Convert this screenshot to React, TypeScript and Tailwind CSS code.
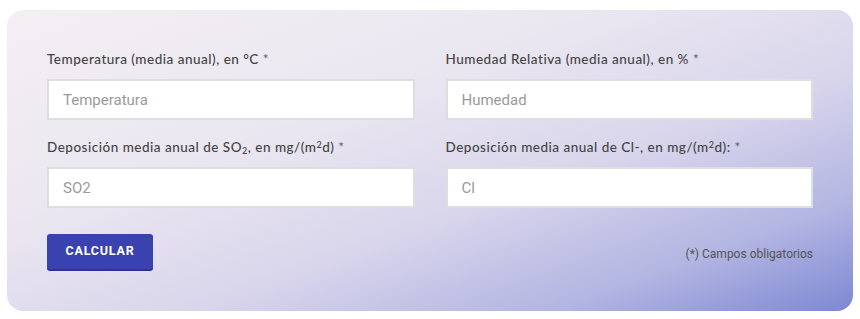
const fields = [
  {
    label: (
      <>
        Temperatura (media anual), en °C <span className="text-[#666]">*</span>
      </>
    ),
    placeholder: "Temperatura",
  },
  {
    label: (
      <>
        Humedad Relativa (media anual), en % <span className="text-[#666]">*</span>
      </>
    ),
    placeholder: "Humedad",
  },
  {
    label: (
      <>
        Deposición media anual de SO<sub className="text-[9px]">2</sub>, en mg/(m
        <sup className="text-[9px]">2</sup>d) <span className="text-[#666]">*</span>
      </>
    ),
    placeholder: "SO2",
  },
  {
    label: (
      <>
        Deposición media anual de Cl-, en mg/(m<sup className="text-[9px]">2</sup>d):{" "}
        <span className="text-[#666]">*</span>
      </>
    ),
    placeholder: "Cl",
  },
];

const App = () => {
  return (
    <div className="bg-white w-[860px] h-[319px] pt-[10px] pl-[7px]">
      <div className="w-[846px] h-[301px] rounded-2xl px-10 pt-10 bg-[linear-gradient(160deg,#f4eff3_0%,#ebe7f1_35%,#d9d6ec_60%,#b3b5e2_82%,#7d88d3_100%)]">
        {/* form grid */}
        <div className="grid grid-cols-2 gap-x-[31px] gap-y-[18px]">
          {fields.map((f, key) => (
            <div key={key} className="flex flex-col gap-[11px]">
              <label className="h-[18px] text-[13.5px] leading-[18px] text-[#444] tracking-[0.5px] font-['Lato',sans-serif] font-medium">
                {f.label}
              </label>
              <input
                placeholder={f.placeholder}
                className="h-[41px] w-full bg-white border-2 border-[#dedede] px-[14px] text-[15px] font-['Roboto',sans-serif] text-[#333] placeholder:text-[#9a9a9a] outline-none"
              />
            </div>
          ))}
        </div>
        {/* actions */}
        <div className="flex justify-between items-center mt-[26px]">
          <button className="w-[106px] h-[37px] rounded-[3px] bg-[#3942af] border-b-2 border-[#2d3590] text-white text-[12.5px] font-bold tracking-[0.8px] font-['Roboto',sans-serif]">
            CALCULAR
          </button>
          <span className="text-[12px] text-[#555] font-['Roboto',sans-serif] mt-[3px]">
            (*) Campos obligatorios
          </span>
        </div>
      </div>
    </div>
  );
};

export default App;
